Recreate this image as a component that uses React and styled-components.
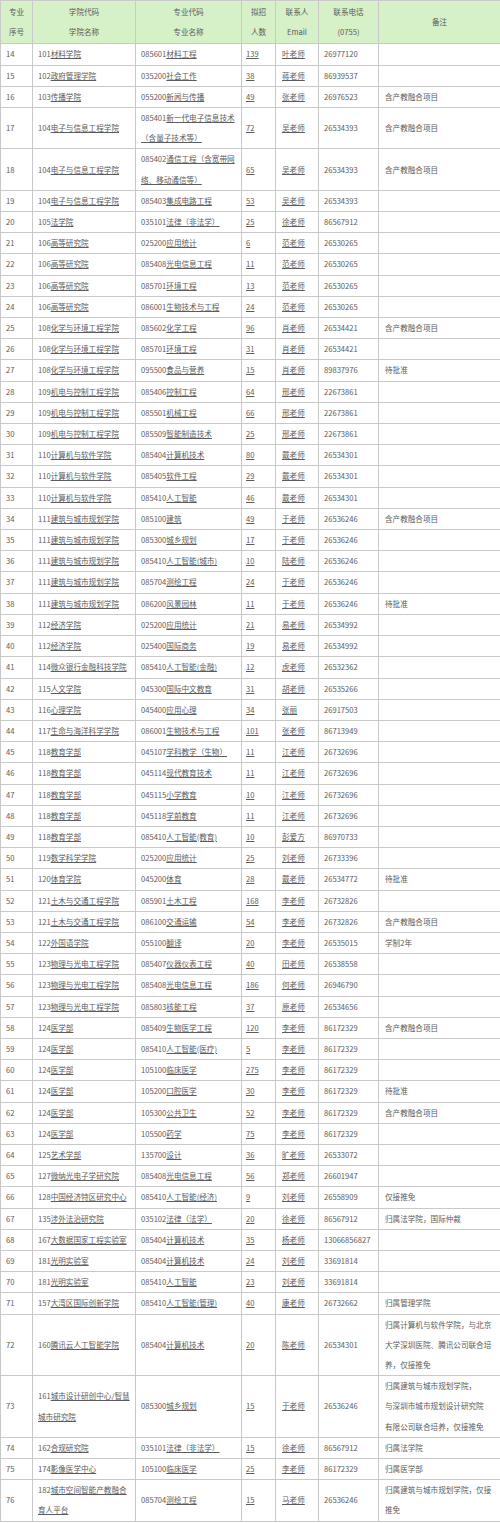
import React from "react";
import styled, { createGlobalStyle } from "styled-components";

// names given as arrays are already split into the lines they wrap into
const rows = [
  [14, "101", "材料学院", "085601", "材料工程", "139", "叶老师", "26977120", ""],
  [15, "102", "政府管理学院", "035200", "社会工作", "38", "蒋老师", "86939537", ""],
  [16, "103", "传播学院", "055200", "新闻与传播", "49", "张老师", "26976523", "含产教融合项目"],
  [17, "104", "电子与信息工程学院", "085401", ["新一代电子信息技术", "（含量子技术等）"], "72", "吴老师", "26534393", "含产教融合项目"],
  [18, "104", "电子与信息工程学院", "085402", ["通信工程（含宽带网", "络、移动通信等）"], "65", "吴老师", "26534393", "含产教融合项目"],
  [19, "104", "电子与信息工程学院", "085403", "集成电路工程", "53", "吴老师", "26534393", ""],
  [20, "105", "法学院", "035101", "法律（非法学）", "25", "徐老师", "86567912", ""],
  [21, "106", "高等研究院", "025200", "应用统计", "6", "范老师", "26530265", ""],
  [22, "106", "高等研究院", "085408", "光电信息工程", "11", "范老师", "26530265", ""],
  [23, "106", "高等研究院", "085701", "环境工程", "13", "范老师", "26530265", ""],
  [24, "106", "高等研究院", "086001", "生物技术与工程", "24", "范老师", "26530265", ""],
  [25, "108", "化学与环境工程学院", "085602", "化学工程", "96", "肖老师", "26534421", "含产教融合项目"],
  [26, "108", "化学与环境工程学院", "085701", "环境工程", "31", "肖老师", "26534421", ""],
  [27, "108", "化学与环境工程学院", "095500", "食品与营养", "15", "肖老师", "89837976", "待批准"],
  [28, "109", "机电与控制工程学院", "085406", "控制工程", "64", "邢老师", "22673861", ""],
  [29, "109", "机电与控制工程学院", "085501", "机械工程", "66", "邢老师", "22673861", ""],
  [30, "109", "机电与控制工程学院", "085509", "智能制造技术", "25", "邢老师", "22673861", ""],
  [31, "110", "计算机与软件学院", "085404", "计算机技术", "80", "戴老师", "26534301", ""],
  [32, "110", "计算机与软件学院", "085405", "软件工程", "29", "戴老师", "26534301", ""],
  [33, "110", "计算机与软件学院", "085410", "人工智能", "46", "戴老师", "26534301", ""],
  [34, "111", "建筑与城市规划学院", "085100", "建筑", "49", "于老师", "26536246", "含产教融合项目"],
  [35, "111", "建筑与城市规划学院", "085300", "城乡规划", "17", "于老师", "26536246", ""],
  [36, "111", "建筑与城市规划学院", "085410", "人工智能(城市)", "10", "陆老师", "26536246", ""],
  [37, "111", "建筑与城市规划学院", "085704", "测绘工程", "24", "于老师", "26536246", ""],
  [38, "111", "建筑与城市规划学院", "086200", "风景园林", "11", "于老师", "26536246", "待批准"],
  [39, "112", "经济学院", "025200", "应用统计", "21", "易老师", "26534992", ""],
  [40, "112", "经济学院", "025400", "国际商务", "19", "易老师", "26534992", ""],
  [41, "114", "微众银行金融科技学院", "085410", "人工智能(金融)", "12", "虎老师", "26532362", ""],
  [42, "115", "人文学院", "045300", "国际中文教育", "31", "胡老师", "26535266", ""],
  [43, "116", "心理学院", "045400", "应用心理", "34", "张丽", "26917503", ""],
  [44, "117", "生命与海洋科学学院", "086001", "生物技术与工程", "101", "张老师", "86713949", ""],
  [45, "118", "教育学部", "045107", "学科教学（生物）", "11", "江老师", "26732696", ""],
  [46, "118", "教育学部", "045114", "现代教育技术", "11", "江老师", "26732696", ""],
  [47, "118", "教育学部", "045115", "小学教育", "10", "江老师", "26732696", ""],
  [48, "118", "教育学部", "045118", "学前教育", "11", "江老师", "26732696", ""],
  [49, "118", "教育学部", "085410", "人工智能(教育)", "10", "彭爱方", "86970733", ""],
  [50, "119", "数学科学学院", "025200", "应用统计", "25", "刘老师", "26733396", ""],
  [51, "120", "体育学院", "045200", "体育", "28", "戴老师", "26534772", "待批准"],
  [52, "121", "土木与交通工程学院", "085901", "土木工程", "168", "李老师", "26732826", ""],
  [53, "121", "土木与交通工程学院", "086100", "交通运输", "54", "李老师", "26732826", "含产教融合项目"],
  [54, "122", "外国语学院", "055100", "翻译", "20", "李老师", "26535015", "学制2年"],
  [55, "123", "物理与光电工程学院", "085407", "仪器仪表工程", "40", "田老师", "26538558", ""],
  [56, "123", "物理与光电工程学院", "085408", "光电信息工程", "186", "何老师", "26946790", ""],
  [57, "123", "物理与光电工程学院", "085803", "核能工程", "37", "原老师", "26534656", ""],
  [58, "124", "医学部", "085409", "生物医学工程", "120", "李老师", "86172329", "含产教融合项目"],
  [59, "124", "医学部", "085410", "人工智能(医疗)", "5", "李老师", "86172329", ""],
  [60, "124", "医学部", "105100", "临床医学", "275", "李老师", "86172329", ""],
  [61, "124", "医学部", "105200", "口腔医学", "30", "李老师", "86172329", "待批准"],
  [62, "124", "医学部", "105300", "公共卫生", "52", "李老师", "86172329", "含产教融合项目"],
  [63, "124", "医学部", "105500", "药学", "75", "李老师", "86172329", ""],
  [64, "125", "艺术学部", "135700", "设计", "36", "旷老师", "26533072", ""],
  [65, "127", "微纳光电子学研究院", "085408", "光电信息工程", "56", "郑老师", "26601947", ""],
  [66, "128", "中国经济特区研究中心", "085410", "人工智能(经济)", "9", "刘老师", "26558909", "仅接推免"],
  [67, "135", "涉外法治研究院", "035102", "法律（法学）", "20", "徐老师", "86567912", "归属法学院，国际仲裁"],
  [68, "167", "大数据国家工程实验室", "085404", "计算机技术", "35", "杨老师", "13066856827", ""],
  [69, "181", "光明实验室", "085404", "计算机技术", "24", "刘老师", "33691814", ""],
  [70, "181", "光明实验室", "085410", "人工智能", "23", "刘老师", "33691814", ""],
  [71, "157", "大湾区国际创新学院", "085410", "人工智能(管理)", "40", "康老师", "26732662", "归属管理学院"],
  [72, "160", "腾讯云人工智能学院", "085404", "计算机技术", "20", "陈老师", "26534301", ["归属计算机与软件学院，与北京", "大学深圳医院、腾讯公司联合培", "养，仅接推免"]],
  [73, "161", ["城市设计研创中心/智慧", "城市研究院"], "085300", "城乡规划", "15", "于老师", "26536246", ["归属建筑与城市规划学院，", "与深圳市城市规划设计研究院", "有限公司联合培养，仅接推免"]],
  [74, "162", "合规研究院", "035101", "法律（非法学）", "15", "徐老师", "86567912", "归属法学院"],
  [75, "174", "影像医学中心", "105100", "临床医学", "25", "李老师", "86172329", "归属医学部"],
  [76, "182", ["城市空间智能产教融合", "育人平台"], "085704", "测绘工程", "15", "马老师", "26536246", ["归属建筑与城市规划学院，仅接", "推免"]],
];

const heads = [
  ["专业", "序号"],
  ["学院代码", "学院名称"],
  ["专业代码", "专业名称"],
  ["拟招", "人数"],
  ["联系人", "Email"],
  ["联系电话", "(0755)"],
  ["备注"],
];

const widths = [32, 103, 106, 34, 43, 60, 122];

const CodeName = ({ code, name }) => {
  const lines = Array.isArray(name) ? name : [name];
  return lines.map((line, i) => (
    <Line key={i}>
      {i === 0 && code}
      <Link>{line}</Link>
    </Line>
  ));
};

const App = () => {
  return (
    <>
      <GlobalStyle />
      <Table>
        <colgroup>
          {widths.map((w, i) => (
            <col key={i} style={{ width: w }} />
          ))}
        </colgroup>
        <thead>
          <tr>
            {heads.map((h, i) => (
              <HeadCell key={i}>
                {h.map((line, j) => (
                  <Line key={j}>{line}</Line>
                ))}
              </HeadCell>
            ))}
          </tr>
        </thead>
        <tbody>
          {rows.map((r) => (
            <tr key={r[0]}>
              <Cell>{r[0]}</Cell>
              <Cell>
                <CodeName code={r[1]} name={r[2]} />
              </Cell>
              <Cell>
                <CodeName code={r[3]} name={r[4]} />
              </Cell>
              <Cell $pad={4}>
                <Link>{r[5]}</Link>
              </Cell>
              <Cell $pad={6}>
                <Link>{r[6]}</Link>
              </Cell>
              <Cell>{r[7]}</Cell>
              <Cell $pad={6}>
                {Array.isArray(r[8])
                  ? r[8].map((line, j) => <Line key={j}>{line}</Line>)
                  : r[8]}
              </Cell>
            </tr>
          ))}
        </tbody>
      </Table>
    </>
  );
};

export default App;

const GlobalStyle = createGlobalStyle`
  body {
    margin: 0;
    background: #fff;
    font-family: "Noto Sans CJK SC", "Noto Sans", sans-serif;
  }
`;

const Table = styled.table`
  width: 500px;
  table-layout: fixed;
  border-collapse: collapse;
  font-size: 7.6px;
  line-height: 20.2px;
  color: #5c5c5c;
`;

const HeadCell = styled.th`
  background: #d6f0c8;
  border: 1px solid #c9c9c9;
  padding: 1px 2px;
  font-weight: 400;
  text-align: center;
  vertical-align: middle;
`;

const Cell = styled.td`
  border: 1px solid #c9c9c9;
  padding: 0 ${(p) => p.$pad ?? 5}px;
  text-align: left;
  vertical-align: middle;
`;

const Line = styled.div`
  white-space: nowrap;
`;

const Link = styled.span`
  text-decoration: underline;
  text-underline-offset: 1px;
`;
